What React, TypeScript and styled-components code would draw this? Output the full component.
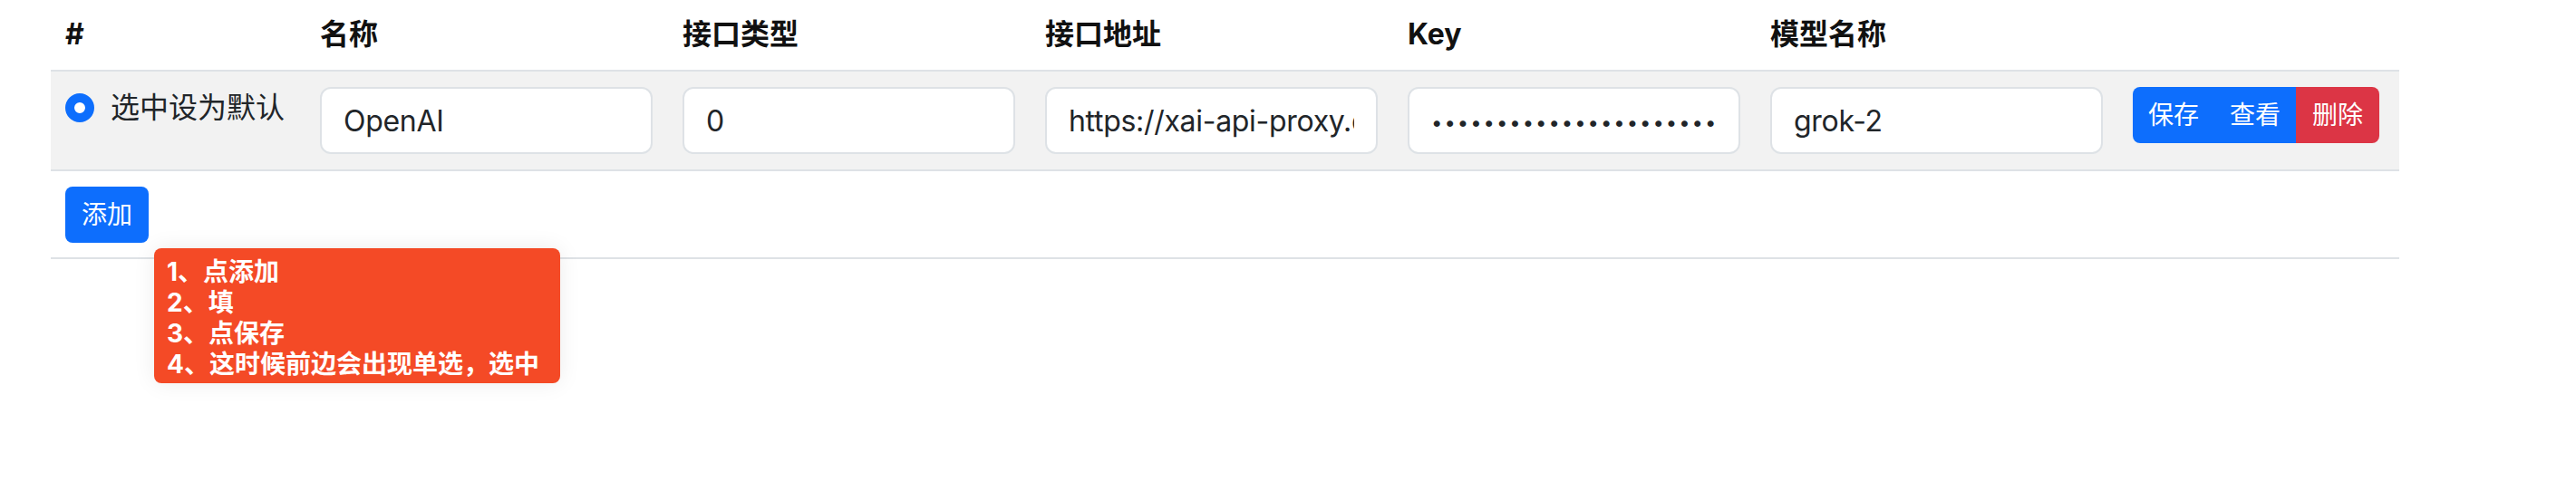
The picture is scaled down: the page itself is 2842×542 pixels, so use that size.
import React from "react";
import styled, { createGlobalStyle } from "styled-components";

const Global = createGlobalStyle`
  html, body { margin: 0; padding: 0; background: #fff; }
  body {
    font-family: Inter, "Noto Sans CJK SC", "Noto Sans", sans-serif;
    color: #212529;
  }
  * { box-sizing: border-box; }
`;

const Page = styled.div`
  padding-left: 56px;
  width: 2842px;
  min-height: 542px;
`;

const Table = styled.div`
  width: 2591px;
`;

const cols = `281px 400px 400px 400px 400px 400px 1fr`;

const HeadRow = styled.div`
  display: grid;
  grid-template-columns: ${cols};
  border-bottom: 2px solid #dee2e6;
`;

const HeadCell = styled.div`
  padding: 14px 16px 15px;
  font-size: 32px;
  line-height: 48px;
  font-weight: 700;
  color: #111;
`;

const DataRow = styled.div`
  display: grid;
  grid-template-columns: ${cols};
  background: #f2f2f2;
  border-bottom: 2px solid #dee2e6;
`;

const Cell = styled.div`
  padding: 17px 16px 17px;
  display: flex;
  align-items: flex-start;
`;

const RadioCell = styled(Cell)`
  padding-top: 16px;
  gap: 18px;
  align-items: center;
  height: 80px;
`;

const Radio = styled.span`
  width: 32px;
  height: 32px;
  border-radius: 50%;
  border: 10px solid #0d6efd;
  background: #fff;
  flex: none;
`;

const RadioLabel = styled.span`
  font-size: 32px;
  line-height: 48px;
  color: #212529;
`;

const Input = styled.input`
  width: 367px;
  height: 74px;
  border: 2px solid #dee2e6;
  border-radius: 12px;
  background: #fff;
  padding: 0 24px;
  font-family: Inter, "Noto Sans CJK SC", sans-serif;
  font-size: 32px;
  letter-spacing: -0.3px;
  color: #212529;
  outline: none;
`;

const PasswordInput = styled(Input)`
  font-size: 22px;
  letter-spacing: 2px;
  padding-top: 4px;
`;

const ActionCell = styled.div`
  padding: 17px 16px;
`;

const BtnGroup = styled.div`
  display: inline-flex;
  border-radius: 8px;
  overflow: hidden;
`;

const Btn = styled.button<{ $danger?: boolean }>`
  height: 62px;
  border: none;
  margin: 0;
  padding: 0 ${(p) => (p.$danger ? "18px" : "17px")};
  font-family: Inter, "Noto Sans CJK SC", sans-serif;
  font-size: 28px;
  line-height: 62px;
  color: #fff;
  background: ${(p) => (p.$danger ? "#dc3545" : "#0d6efd")};
`;

const FootRow = styled.div`
  padding: 17px 16px 16px;
  border-bottom: 2px solid #dee2e6;
`;

const AddWrap = styled.div`
  position: relative;
  display: inline-block;
  vertical-align: top;
`;

const AddBtn = styled(Btn)`
  display: block;
  width: 92px;
  border-radius: 8px;
  padding: 0;
`;

const Tip = styled.div`
  position: absolute;
  left: 98px;
  top: 68px;
  width: 448px;
  height: 149px;
  background: #f44a26;
  border-radius: 8px;
  padding: 9px 14px 6px;
  color: #fff;
  font-weight: 700;
  font-size: 28px;
  line-height: 34px;
  box-shadow: 0 0 24px rgba(0, 0, 0, 0.08);
  white-space: nowrap;
  z-index: 2;
`;

const TipLine = styled.div``;

export default function App() {
  return (
    <>
      <Global />
      <Page>
        <Table>
          <HeadRow>
            <HeadCell>#</HeadCell>
            <HeadCell>名称</HeadCell>
            <HeadCell>接口类型</HeadCell>
            <HeadCell>接口地址</HeadCell>
            <HeadCell>Key</HeadCell>
            <HeadCell>模型名称</HeadCell>
            <HeadCell />
          </HeadRow>
          <DataRow>
            <RadioCell>
              <Radio />
              <RadioLabel>选中设为默认</RadioLabel>
            </RadioCell>
            <Cell>
              <Input defaultValue="OpenAI" />
            </Cell>
            <Cell>
              <Input defaultValue="0" />
            </Cell>
            <Cell>
              <Input defaultValue="https://xai-api-proxy.deno.dev/v1" />
            </Cell>
            <Cell>
              <PasswordInput type="password" defaultValue="xai-abcdefghijklmnopqr" />
            </Cell>
            <Cell>
              <Input defaultValue="grok-2" />
            </Cell>
            <ActionCell>
              <BtnGroup>
                <Btn>保存</Btn>
                <Btn>查看</Btn>
                <Btn $danger>删除</Btn>
              </BtnGroup>
            </ActionCell>
          </DataRow>
          <FootRow>
            <AddWrap>
              <AddBtn>添加</AddBtn>
              <Tip>
                <TipLine>1、点添加</TipLine>
                <TipLine>2、填</TipLine>
                <TipLine>3、点保存</TipLine>
                <TipLine>4、这时候前边会出现单选，选中</TipLine>
              </Tip>
            </AddWrap>
          </FootRow>
        </Table>
      </Page>
    </>
  );
}
